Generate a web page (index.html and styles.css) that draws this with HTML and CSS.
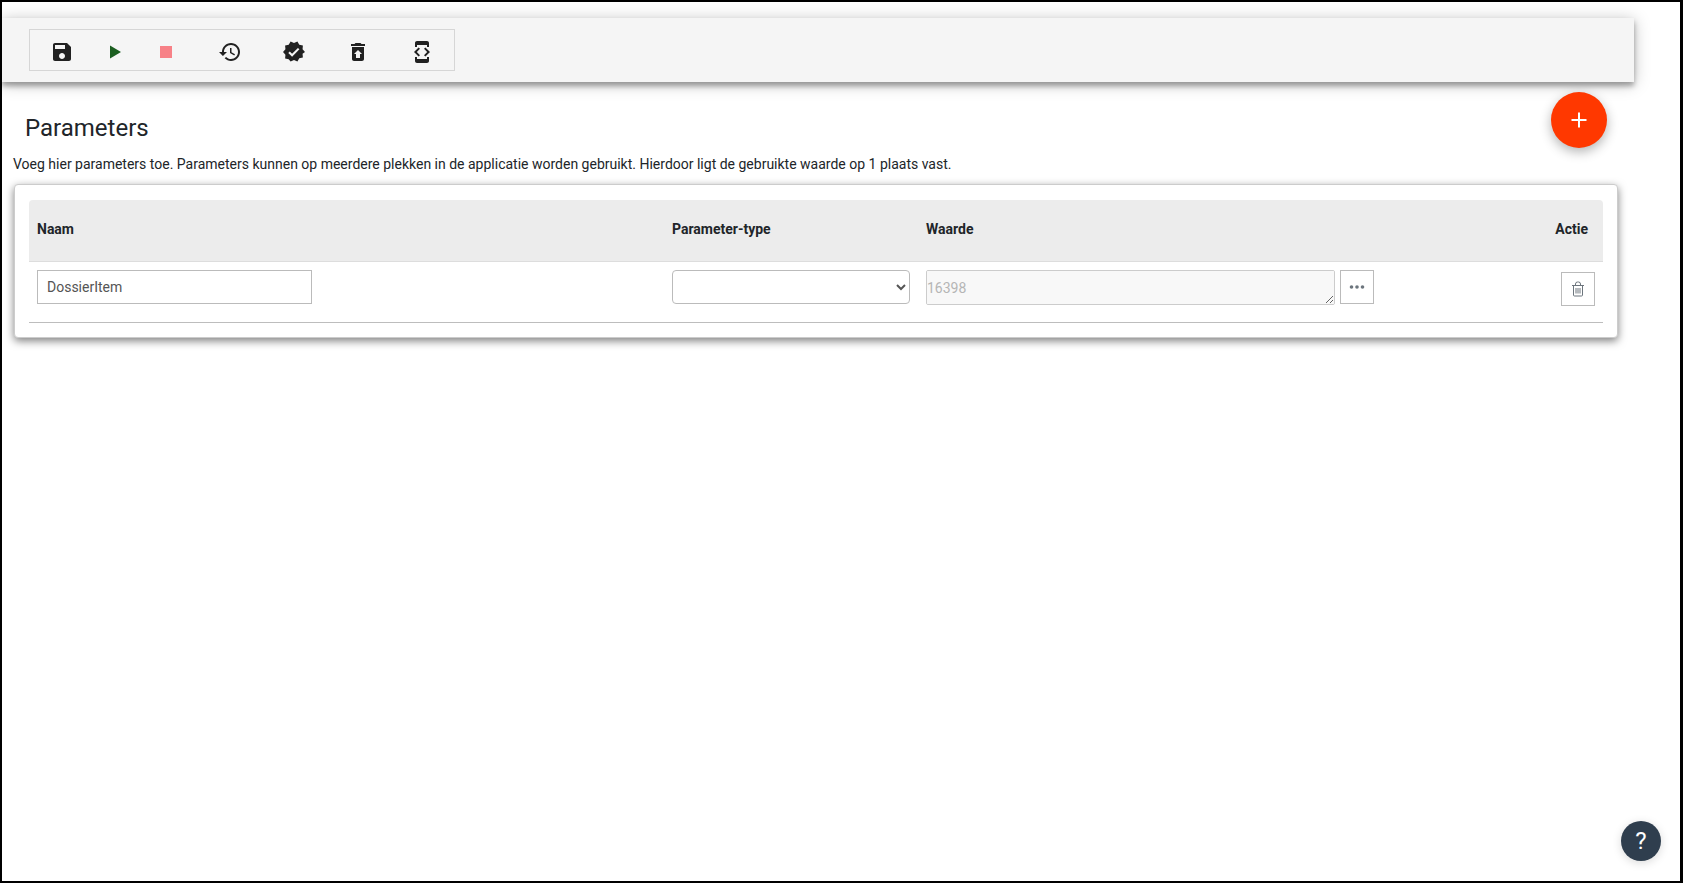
FILE: index.html
```html
<!DOCTYPE html>
<html lang="en">
<head>
  <meta charset="UTF-8">
  <title>Parameters</title>
  <link rel="stylesheet" href="styles.css">
</head>
<body>
  <div class="frame">
    <!-- Toolbar -->
    <div class="toolbar">
      <div class="tool-group">
        <button class="tool tool-first"><svg viewBox="0 0 24 24"><path d="M17 3H5c-1.11 0-2 .9-2 2v14c0 1.1.89 2 2 2h14c1.1 0 2-.9 2-2V7l-4-4zm-5 16c-1.66 0-3-1.34-3-3s1.34-3 3-3 3 1.34 3 3-1.34 3-3 3zm3-10H5V5h10v4z"/></svg></button>
        <button class="tool tool-play"><svg viewBox="0 0 24 24"><path d="M8 5.500v13L19 12z"/></svg></button>
        <button class="tool tool-stop"><svg viewBox="0 0 24 24"><path d="M6 6h12v12H6z"/></svg></button>
        <button class="tool tool-second"><svg viewBox="0 0 24 24"><path d="M13 3c-4.97 0-9 4.03-9 9H1l3.89 3.89.07.14L9 12H6c0-3.87 3.13-7 7-7s7 3.13 7 7-3.13 7-7 7c-1.93 0-3.68-.79-4.94-2.06l-1.42 1.42C8.27 19.99 10.51 21 13 21c4.97 0 9-4.03 9-9s-4.03-9-9-9zm-1 5v5l4.28 2.54.72-1.21-3.5-2.08V8H12z"/></svg></button>
        <button class="tool tool-wide"><svg viewBox="0 0 24 24"><path d="M23 12l-2.44-2.79.34-3.69-3.61-.82-1.89-3.2L12 2.96 8.6 1.5 6.71 4.69 3.1 5.5l.34 3.7L1 12l2.44 2.79-.34 3.7 3.61.82L8.6 21.5l3.4-1.47 3.4 1.46 1.89-3.19 3.61-.82-.34-3.69L23 12zm-12.91 4.72l-3.8-3.81 1.48-1.48 2.32 2.33 5.85-5.87 1.48 1.48-7.33 7.35z"/></svg></button>
        <button class="tool tool-wide"><svg viewBox="0 0 24 24"><path d="M19 4h-3.5l-1-1h-5l-1 1H5v2h14zM6 7v12c0 1.1.9 2 2 2h8c1.1 0 2-.9 2-2V7H6zm8 7v4h-4v-4H8l4-4 4 4h-2z"/></svg></button>
        <button class="tool tool-wide"><svg viewBox="0 0 24 24"><path d="M7 5h10v2h2V3c0-1.1-.9-1.99-2-1.99L7 1c-1.1 0-2 .9-2 2v4h2V5zm8.41 11.59L20 12l-4.59-4.59L14 8.83 17.17 12 14 15.17l1.41 1.42zM10 15.17L6.83 12 10 8.83 8.59 7.41 4 12l4.59 4.59L10 15.17zM17 19H7v-2H5v4c0 1.1.9 2 2 2h10c1.1 0 2-.9 2-2v-4h-2v2z"/></svg></button>
      </div>
    </div>

    <button class="fab"><svg viewBox="0 0 24 24"><path d="M11 4.500h2V11h6.500v2H13v6.500h-2V13H4.500v-2H11z"/></svg></button>

    <h2 class="page-title">Parameters</h2>
    <p class="page-intro">Voeg hier parameters toe. Parameters kunnen op meerdere plekken in de applicatie worden gebruikt. Hierdoor ligt de gebruikte waarde op 1 plaats vast.</p>

    <!-- Parameter table -->
    <div class="card">
      <table class="param-table">
        <thead>
          <tr>
            <th class="col-name">Naam</th>
            <th class="col-type">Parameter-type</th>
            <th>Waarde</th>
            <th class="col-action">Actie</th>
          </tr>
        </thead>
        <tbody>
          <tr>
            <td><input class="name-input" type="text" value="DossierItem"></td>
            <td><select class="type-select"><option></option></select></td>
            <td>
              <div class="value-cell">
                <textarea class="value-input" disabled>16398</textarea>
                <button class="square-btn"><svg class="dots" viewBox="0 0 18 18"><circle cx="3.500" cy="9" r="1.800"/><circle cx="9" cy="9" r="1.800"/><circle cx="14.500" cy="9" r="1.800"/></svg></button>
              </div>
            </td>
            <td class="action-cell">
              <button class="square-btn"><svg class="trash" viewBox="0 0 16 16"><path d="M2 4.500h12M5.500 4.500V3a2 2 0 0 1 2-2h1a2 2 0 0 1 2 2v1.500M3.500 4.500V14a1 1 0 0 0 1 1h7a1 1 0 0 0 1-1V4.500M6 7v5.500M8 7v5.500M10 7v5.500"/></svg></button>
            </td>
          </tr>
        </tbody>
      </table>
    </div>

    <button class="help-btn">?</button>
  </div>
</body>
</html>
```

FILE: styles.css
```css
* {
  box-sizing: border-box;
}
html, body {
  margin: 0;
}
body {
  font-family: Roboto, "Liberation Sans", sans-serif;
  font-size: 14px;
  color: #212529;
  background-color: #fff;
}
button {
  font-family: inherit;
  cursor: pointer;
}

.frame {
  position: relative;
  height: 883px;
  overflow: hidden;
  border: solid #000;
  border-width: 2px 3px 2px 2px;
  padding-top: 16px;
}

/* Toolbar */
.toolbar {
  width: 1632px;
  height: 64px;
  padding: 11px 0 0 27px;
  background-color: #f5f5f5;
  box-shadow: 0 4px 5px rgba(0,0,0,0.3), 0 2px 15px rgba(0,0,0,0.25);
}
.tool-group {
  display: flex;
  width: 426px;
  height: 42px;
  padding-top: 10px;
  border: 1px solid #d6d6d6;
}
.tool {
  width: 24px;
  height: 24px;
  padding: 0;
  border: 0;
  background: none;
  margin-left: 28px;
}
.tool svg {
  display: block;
  width: 24px;
  height: 24px;
  fill: #212121;
}
.tool-first {
  margin-left: 20px;
}
.tool-second {
  margin-left: 40px;
}
.tool-wide {
  margin-left: 40px;
}
.tool-play svg {
  fill: #1b5e20;
}
.tool-stop svg {
  fill: #f78187;
}

/* Round buttons */
.fab {
  position: absolute;
  top: 90px;
  left: 1549px;
  width: 56px;
  height: 56px;
  padding: 0;
  border: 0;
  border-radius: 50%;
  background-color: #ff3800;
  box-shadow: 0 4px 12px rgba(0,0,0,0.3);
}
.fab svg {
  display: block;
  width: 24px;
  height: 24px;
  margin: 0 auto;
  fill: #fff;
}
.help-btn {
  position: absolute;
  left: 1619px;
  top: 819px;
  width: 40px;
  height: 40px;
  padding: 0;
  border: 0;
  border-radius: 50%;
  background-color: #2f3e4e;
  color: #fff;
  font-size: 24px;
  font-weight: 400;
  box-shadow: 0 2px 10px rgba(0,0,0,0.15);
}

/* Heading */
.page-title {
  margin: 32px 0 0 23px;
  font-size: 24px;
  font-weight: 400;
  line-height: 28px;
}
.page-intro {
  margin: 12px 0 0 11px;
  line-height: 20px;
}

/* Card with table */
.card {
  width: 1604px;
  height: 154px;
  margin: 10px 0 0 12px;
  padding: 15px 14px;
  border: 1px solid #ccc;
  border-radius: 4px;
  background-color: #fff;
  box-shadow: 0 3px 9px rgba(0,0,0,0.5);
}
.param-table {
  width: 100%;
  table-layout: fixed;
  border-collapse: separate;
  border-spacing: 0;
}
.param-table th {
  height: 62px;
  padding: 0 8px 4px;
  background-color: #ececec;
  border-bottom: 1px solid #ddd;
  font-size: 14px;
  font-weight: 700;
  text-align: left;
}
.param-table .col-name {
  width: 635px;
  border-top-left-radius: 4px;
}
.param-table .col-type {
  width: 254px;
}
.param-table .col-action {
  width: 120px;
  padding-right: 15px;
  text-align: right;
  border-top-right-radius: 4px;
}
.param-table td {
  height: 61px;
  padding: 8px;
  vertical-align: top;
  border-bottom: 1px solid #bdbdbd;
}
.name-input {
  display: block;
  width: 275px;
  height: 34px;
  padding: 0 9px;
  border: 1px solid #bbb;
  font-family: inherit;
  font-size: 14px;
  color: #555;
}
.type-select {
  display: block;
  width: 238px;
  height: 34px;
  border: 1px solid #bbb;
  border-radius: 4px;
  background-color: #fff;
  font-family: inherit;
  font-size: 14px;
  color: #555;
}
.value-cell {
  display: flex;
  gap: 5px;
}
.value-input {
  display: block;
  width: 409px;
  height: 35px;
  padding: 7px 0;
  border: 1px solid #ccc;
  border-radius: 2px;
  background-color: #f8f8f8;
  font-family: inherit;
  font-size: 14px;
  line-height: 20px;
  color: #b5b5b5;
}
.square-btn {
  width: 34px;
  height: 34px;
  padding: 0;
  border: 1px solid #bbb;
  background-color: #fff;
}
.square-btn svg {
  display: block;
  width: 16px;
  height: 16px;
  margin: 0 auto;
  fill: #6c757d;
}
.square-btn .dots {
  width: 18px;
  height: 18px;
}
.square-btn .trash {
  fill: none;
  stroke: #6c757d;
  stroke-width: 1;
}
.action-cell {
  text-align: right;
}
.param-table .action-cell {
  padding-top: 10px;
}
```
